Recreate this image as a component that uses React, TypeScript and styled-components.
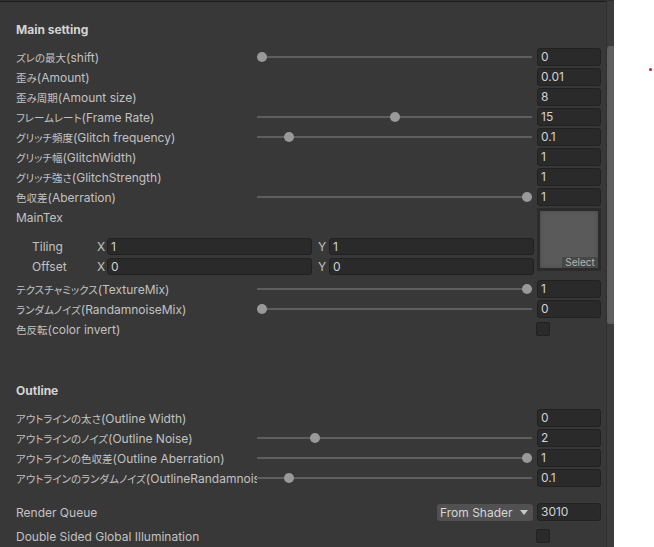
import styled, { createGlobalStyle } from "styled-components";

const GlobalStyle = createGlobalStyle`
  html, body {
    margin: 0;
    padding: 0;
    background: #ffffff;
  }
  body {
    font-family: Inter, "Noto Sans CJK JP", sans-serif;
    font-size: 12px;
  }
`;

type SliderProp = {
  label: string;
  value: string;
  slider?: number;
};

const mainProps: SliderProp[] = [
  { label: "ズレの最大(shift)", value: "0", slider: 0 },
  { label: "歪み(Amount)", value: "0.01" },
  { label: "歪み周期(Amount size)", value: "8" },
  { label: "フレームレート(Frame Rate)", value: "15", slider: 0.5 },
  { label: "グリッチ頻度(Glitch frequency)", value: "0.1", slider: 0.1 },
  { label: "グリッチ幅(GlitchWidth)", value: "1" },
  { label: "グリッチ強さ(GlitchStrength)", value: "1" },
  { label: "色収差(Aberration)", value: "1", slider: 1 },
];

const mixProps: SliderProp[] = [
  { label: "テクスチャミックス(TextureMix)", value: "1", slider: 1 },
  { label: "ランダムノイズ(RandamnoiseMix)", value: "0", slider: 0 },
];

const outlineProps: SliderProp[] = [
  { label: "アウトラインの太さ(Outline Width)", value: "0" },
  { label: "アウトラインのノイズ(Outline Noise)", value: "2", slider: 0.2 },
  { label: "アウトラインの色収差(Outline Aberration)", value: "1", slider: 1 },
  { label: "アウトラインのランダムノイズ(OutlineRandamnoiseMix)", value: "0.1", slider: 0.1 },
];

const CJK = /([\u3000-\u30ff\u4e00-\u9fff]+)/;

// japanese runs use the proportional cjk metrics, a bit smaller than the latin text
function LabelText({ text }: { text: string }) {
  const parts = text.split(CJK).filter(Boolean);
  return (
    <>
      {parts.map((part, i) =>
        CJK.test(part) ? <Jp key={i}>{part}</Jp> : <span key={i}>{part}</span>
      )}
    </>
  );
}

function PropertyRow({ label, value, slider }: SliderProp) {
  return (
    <Row>
      <Label>
        <LabelText text={label} />
      </Label>
      <SliderTrack>
        {slider !== undefined && (
          <>
            <TrackLine />
            <Thumb style={{ left: `calc((100% - 10px) * ${slider})` }} />
          </>
        )}
      </SliderTrack>
      <NumberField>{value}</NumberField>
    </Row>
  );
}

function App() {
  return (
    <Page>
      <GlobalStyle />
      <Inspector>
        <Content>
          <SectionHeader>Main setting</SectionHeader>
          {mainProps.map((p) => (
            <PropertyRow key={p.label} {...p} />
          ))}

          <TexBlock>
            <TexLeft>
              <Row>
                <Label>MainTex</Label>
              </Row>
              <VectorRows>
                <VectorRow>
                  <SubLabel>Tiling</SubLabel>
                  <Axis>X</Axis>
                  <VecField>1</VecField>
                  <Axis $gap>Y</Axis>
                  <VecField>1</VecField>
                </VectorRow>
                <VectorRow>
                  <SubLabel>Offset</SubLabel>
                  <Axis>X</Axis>
                  <VecField>0</VecField>
                  <Axis $gap>Y</Axis>
                  <VecField>0</VecField>
                </VectorRow>
              </VectorRows>
            </TexLeft>
            <TexSlot>
              <SelectButton>Select</SelectButton>
            </TexSlot>
          </TexBlock>

          {mixProps.map((p) => (
            <PropertyRow key={p.label} {...p} />
          ))}
          <Row>
            <Label>
              <LabelText text="色反転(color invert)" />
            </Label>
            <Spacer />
            <FieldSlot>
              <Checkbox />
            </FieldSlot>
          </Row>

          <SectionHeader $top={42}>Outline</SectionHeader>
          {outlineProps.map((p) => (
            <PropertyRow key={p.label} {...p} />
          ))}

          <QueueRow>
            <Label>Render Queue</Label>
            <Spacer />
            <Dropdown>
              <span>From Shader</span>
              <svg width="8" height="5" viewBox="0 0 8 5">
                <path d="M0 0 L8 0 L4 5 Z" fill="#c8c8c8" />
              </svg>
            </Dropdown>
            <NumberField>3010</NumberField>
          </QueueRow>
          <Row>
            <Label $wide>Double Sided Global Illumination</Label>
            <Spacer />
            <FieldSlot>
              <Checkbox />
            </FieldSlot>
          </Row>
        </Content>
        <ScrollBar>
          <ScrollThumb />
        </ScrollBar>
      </Inspector>
      <SceneArea>
        <Marker />
      </SceneArea>
    </Page>
  );
}

export default App;

const Page = styled.div`
  display: flex;
  height: 547px;
  overflow: hidden;
`;

const Inspector = styled.div`
  display: flex;
  width: 614px;
  flex-shrink: 0;
  background: #383838;
  border-top: 1px solid #2f2f2f;
  box-shadow: inset 0 1px 0 #1c1c1c;
`;

const Content = styled.div`
  flex: 1;
  padding: 19px 5px 0 16px;
  display: flex;
  flex-direction: column;
`;

const SectionHeader = styled.div<{ $top?: number }>`
  height: 20px;
  line-height: 20px;
  margin-top: ${(p) => p.$top ?? 0}px;
  margin-bottom: 7px;
  font-weight: 700;
  font-size: 12px;
  color: #d4d4d4;
`;

const Row = styled.div`
  display: flex;
  align-items: center;
  height: 20px;
`;

const QueueRow = styled(Row)`
  margin-top: 14px;
  margin-bottom: 4px;
`;

const Label = styled.div<{ $wide?: boolean }>`
  width: ${(p) => (p.$wide ? "auto" : "241px")};
  flex-shrink: 0;
  overflow: hidden;
  white-space: nowrap;
  color: #c2c2c2;
  font-size: 12px;
`;

const Jp = styled.span`
  font-family: "Noto Sans CJK JP", sans-serif;
  font-size: 10.5px;
  font-feature-settings: "palt";
`;

const SliderTrack = styled.div`
  position: relative;
  flex: 1;
  height: 20px;
  margin-right: 5px;
`;

const TrackLine = styled.div`
  position: absolute;
  left: 0;
  right: 0;
  top: 9px;
  height: 2px;
  background: #5e5e5e;
`;

const Thumb = styled.div`
  position: absolute;
  top: 5px;
  width: 10px;
  height: 10px;
  border-radius: 50%;
  background: #999999;
`;

const Spacer = styled.div`
  flex: 1;
`;

const NumberField = styled.div`
  box-sizing: border-box;
  width: 64px;
  height: 18px;
  flex-shrink: 0;
  padding-left: 3px;
  line-height: 16px;
  background: #2a2a2a;
  border: 1px solid #212121;
  border-radius: 3px;
  color: #d2d2d2;
  font-size: 12px;
`;

const FieldSlot = styled.div`
  width: 65px;
  flex-shrink: 0;
  display: flex;
`;

const Checkbox = styled.div`
  box-sizing: border-box;
  width: 14px;
  height: 14px;
  background: #2a2a2a;
  border: 1px solid #212121;
  border-radius: 2px;
`;

const TexBlock = styled.div`
  display: flex;
  gap: 3px;
  height: 72px;
`;

const TexLeft = styled.div`
  width: 518px;
  display: flex;
  flex-direction: column;
`;

const VectorRows = styled.div`
  margin-top: 9px;
  display: flex;
  flex-direction: column;
`;

const VectorRow = styled.div`
  display: flex;
  align-items: center;
  height: 20px;
`;

const SubLabel = styled.div`
  width: 65px;
  padding-left: 16px;
  color: #c2c2c2;
  font-size: 12px;
`;

const Axis = styled.div<{ $gap?: boolean }>`
  width: ${(p) => (p.$gap ? "11px" : "10px")};
  margin-left: ${(p) => (p.$gap ? "6px" : "0")};
  color: #c2c2c2;
  font-size: 12px;
`;

const VecField = styled(NumberField)`
  width: 205px;
  height: 17px;
  line-height: 15px;
`;

const TexSlot = styled.div`
  position: relative;
  box-sizing: border-box;
  width: 64px;
  height: 63px;
  margin-top: 1px;
  border: 3px solid #2b2b2b;
  background: #5a5a5a;
  box-shadow: inset 0 0 4px #4a4a4a;
`;

const SelectButton = styled.div`
  position: absolute;
  right: 0;
  bottom: 0;
  width: 36px;
  height: 11px;
  line-height: 11px;
  text-align: center;
  background: #474747;
  color: #b4b4b4;
  font-size: 10px;
`;

const Dropdown = styled.div`
  box-sizing: border-box;
  display: flex;
  align-items: center;
  justify-content: space-between;
  width: 96px;
  height: 17px;
  margin-right: 4px;
  padding: 0 5px 0 3px;
  background: #515151;
  border-radius: 3px;
  color: #d6d6d6;
  font-size: 12px;
`;

const ScrollBar = styled.div`
  width: 8px;
  background: #3b3b3b;
  border-left: 1px solid #2f2f2f;
`;

const ScrollThumb = styled.div`
  margin-top: 45px;
  height: 278px;
  background: #5f5f5f;
  border-radius: 3px 0 0 3px;
`;

const SceneArea = styled.div`
  position: relative;
  flex: 1;
  background: #ffffff;
`;

const Marker = styled.div`
  position: absolute;
  left: 35px;
  top: 68px;
  width: 3px;
  height: 3px;
  border-radius: 50%;
  background: #c8202a;
`;
